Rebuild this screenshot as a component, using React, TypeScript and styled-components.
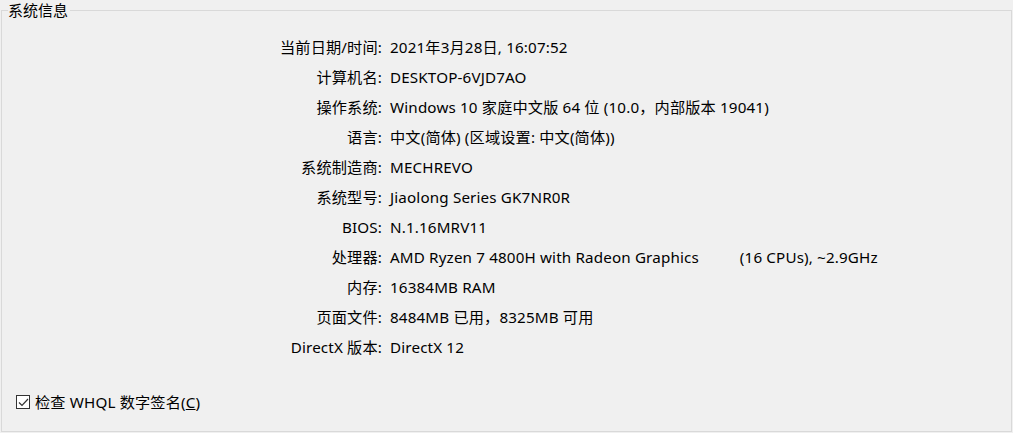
import styled, { createGlobalStyle } from "styled-components";

const GlobalStyle = createGlobalStyle`
  html, body {
    margin: 0;
    padding: 0;
    background: #f0f0f0;
  }
  body {
    font-family: "Noto Sans", "Noto Sans CJK SC", sans-serif;
    color: #000;
  }
`;

const rows: [string, string][] = [
  ["当前日期/时间:", "2021年3月28日, 16:07:52"],
  ["计算机名:", "DESKTOP-6VJD7AO"],
  ["操作系统:", "Windows 10 家庭中文版 64 位 (10.0，内部版本 19041)"],
  ["语言:", "中文(简体) (区域设置: 中文(简体))"],
  ["系统制造商:", "MECHREVO"],
  ["系统型号:", "Jiaolong Series GK7NR0R"],
  ["BIOS:", "N.1.16MRV11"],
  ["处理器:", "AMD Ryzen 7 4800H with Radeon Graphics          (16 CPUs), ~2.9GHz"],
  ["内存:", "16384MB RAM"],
  ["页面文件:", "8484MB 已用，8325MB 可用"],
  ["DirectX 版本:", "DirectX 12"],
];

function App() {
  return (
    <>
      <GlobalStyle />
      <Page>
        <Group>
          <Legend>系统信息</Legend>
          <InfoGrid>
            {rows.map(([label, value]) => (
              <Row key={label}>
                <Label>{label}</Label>
                <Value>{value}</Value>
              </Row>
            ))}
          </InfoGrid>
          <CheckRow>
            <CheckBox>
              <svg width="11" height="9" viewBox="0 0 11 9">
                <path d="M1 4.5 L4 7.5 L10 1" fill="none" stroke="#333" strokeWidth="1.2" />
              </svg>
            </CheckBox>
            <CheckText>
              检查 WHQL 数字签名(<u>C</u>)
            </CheckText>
          </CheckRow>
        </Group>
      </Page>
    </>
  );
}

export default App;

const Page = styled.div`
  width: 1013px;
  height: 433px;
  padding: 0 1px 1px 1px;
  box-sizing: border-box;
`;

const Group = styled.fieldset`
  margin: 0;
  height: 100%;
  box-sizing: border-box;
  border: 1px solid #d9d9d9;
  padding: 0;
  display: flex;
  flex-direction: column;
`;

const Legend = styled.legend`
  font-size: 15px;
  padding: 0 2px 0 0;
  margin-left: 6px;
  line-height: 20px;
`;

const InfoGrid = styled.div`
  display: grid;
  grid-template-columns: 380px 1fr;
  column-gap: 8px;
  margin-top: 12px;
  font-size: 15.2px;
  letter-spacing: 0.15px;
`;

const Row = styled.div`
  display: contents;
`;

const Label = styled.div`
  text-align: right;
  line-height: 30px;
  white-space: nowrap;
`;

const Value = styled.div`
  line-height: 30px;
  white-space: pre;
`;

const CheckRow = styled.div`
  margin-top: auto;
  margin-bottom: 19px;
  display: flex;
  align-items: center;
  gap: 5px;
  padding-left: 14px;
`;

const CheckBox = styled.span`
  width: 12px;
  height: 12px;
  border: 1px solid #333;
  background: #fff;
  display: flex;
  align-items: center;
  justify-content: center;
`;

const CheckText = styled.span`
  font-size: 15.2px;
  letter-spacing: 0.15px;
  line-height: 20px;
`;
